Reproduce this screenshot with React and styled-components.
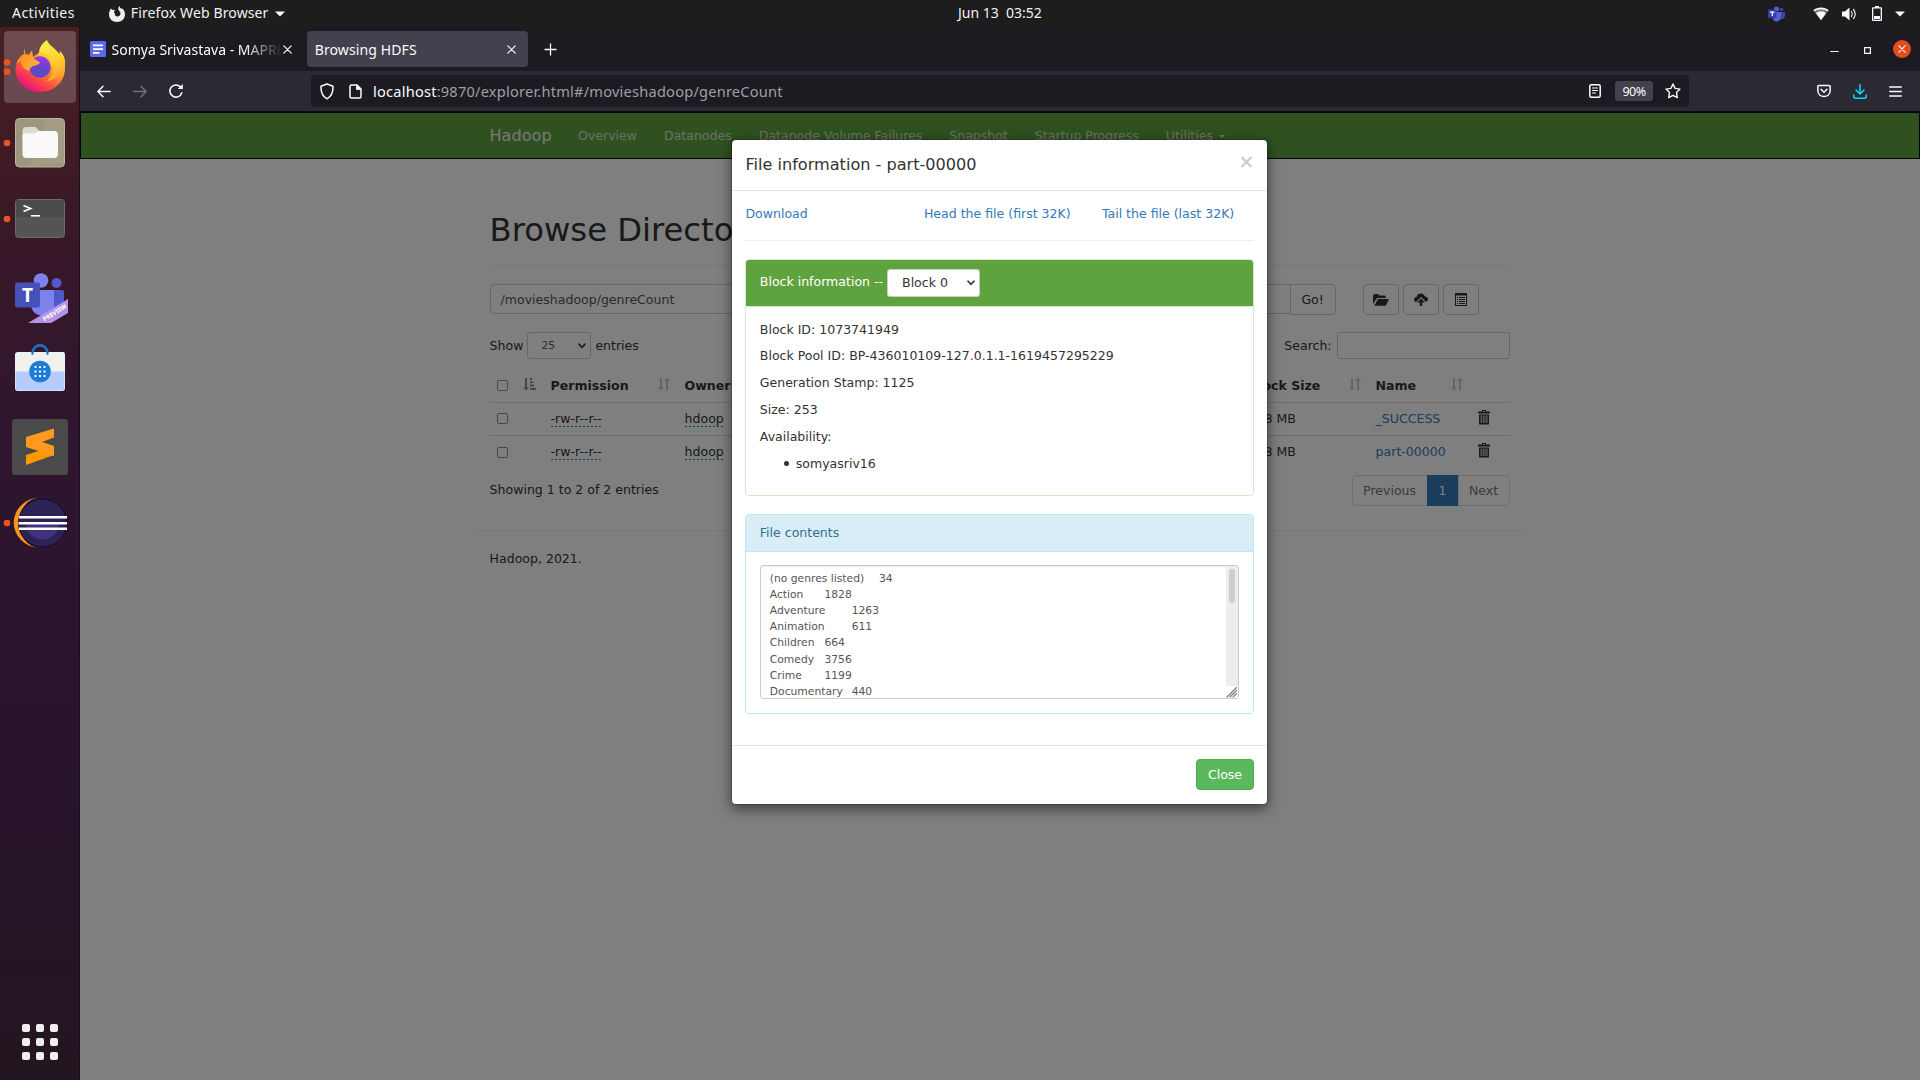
import React from "react";
import styled, { createGlobalStyle } from "styled-components";

const Global = createGlobalStyle`
  *, *::before, *::after { box-sizing: border-box; }
  body { margin: 0; background: #1d1d1d; overflow: hidden; }
`;

const ui = `"Noto Sans", "Open Sans", sans-serif`;
const web = `"DejaVu Sans", Verdana, sans-serif`;

const Desktop = styled.div`
  display: flex;
  flex-direction: column;
  width: 1920px;
  height: 1080px;
  font-family: ${ui};
  overflow: hidden;
`;

/* ---------- system bar ---------- */
const SystemBar = styled.header`
  display: flex;
  align-items: center;
  height: 27px;
  flex: none;
  background: #1d1d1d;
  color: #f2f2f2;
  font-size: 14px;
`;
const BarSide = styled.div`
  display: flex;
  align-items: center;
  ${(p) => (p.$end ? "flex: 1; justify-content: flex-end; padding-right: 15px;" : "width: 958px; padding-left: 12px;")}
`;
const Label = styled.span`
  white-space: pre;
  line-height: 24px;
  padding-bottom: ${(p) => (p.$lift ? 2 : 0)}px;
  letter-spacing: ${(p) => p.$track || 0}px;
  margin-left: ${(p) => p.$gap || 0}px;
`;
const Icon = styled.svg`
  display: block;
  flex: none;
  width: ${(p) => p.$w || 16}px;
  height: ${(p) => p.$h || p.$w || 16}px;
  margin-left: ${(p) => p.$gap || 0}px;
  margin-top: ${(p) => p.$drop || 0}px;
  fill: ${(p) => (p.$line ? "none" : p.$c || "#fbfbfe")};
  stroke: ${(p) => (p.$line ? p.$c || "#fbfbfe" : "none")};
  stroke-width: ${(p) => p.$line || 0};
  stroke-linecap: round;
  stroke-linejoin: round;
`;

/* ---------- dock ---------- */
const Main = styled.div`
  display: flex;
  flex: 1;
  min-height: 0;
`;
const Dock = styled.nav`
  display: flex;
  flex-direction: column;
  justify-content: space-between;
  width: 80px;
  flex: none;
  padding: 2px 0 16px;
  border-right: 1px solid #17101a;
  background: linear-gradient(180deg, #4a1f22 0, #431c24 80px, #391827 200px, #31162d 360px, #2d152f 520px, #27142a 800px, #23161f 1053px);
`;
const DockItems = styled.div`
  display: flex;
  flex-direction: column;
`;
const DockIcon = styled.svg`
  display: block;
  width: 79px;
  height: 76px;
`;
const AppGrid = styled.div`
  display: grid;
  grid-template-columns: repeat(3, 8px);
  grid-auto-rows: 8px;
  gap: 6px;
  padding: 4px 0 4px 22px;
`;
const AppDot = styled.i`
  background: #eeeeec;
  border-radius: 2px;
`;

/* ---------- browser chrome ---------- */
const Browser = styled.div`
  display: flex;
  flex-direction: column;
  flex: 1;
  min-width: 0;
`;
const TabStrip = styled.div`
  display: flex;
  align-items: center;
  height: 44px;
  flex: none;
  padding: 0 9px 0 4px;
  background: #1c1b22;
  color: #fbfbfe;
  font-size: 14px;
`;
const Tab = styled.div`
  display: flex;
  align-items: center;
  width: ${(p) => p.$w}px;
  height: 36px;
  padding-left: ${(p) => p.$pad}px;
  margin-right: ${(p) => p.$after || 0}px;
  border-radius: 4px;
  background: ${(p) => (p.$active ? "#42414d" : "transparent")};
`;
const TabTitle = styled.span`
  width: ${(p) => p.$w}px;
  padding-top: 2px;
  margin-left: ${(p) => p.$gap || 0}px;
  overflow: hidden;
  white-space: nowrap;
  line-height: 24px;
  letter-spacing: ${(p) => p.$track || 0}px;
  ${(p) => p.$fade && "mask-image: linear-gradient(90deg, #000 78%, transparent 100%);"}
`;
const Push = styled.span`
  flex: 1;
`;
const CloseWindow = styled.span`
  display: grid;
  place-items: center;
  width: 18px;
  height: 18px;
  margin-left: 20px;
  border-radius: 50%;
  background: #e24e1b;
`;
const Toolbar = styled.div`
  display: flex;
  align-items: center;
  height: 41px;
  flex: none;
  padding: 0 18px 0 17px;
  background: #2b2a33;
  border-bottom: 1px solid #0c0c0d;
`;
const UrlBar = styled.div`
  display: flex;
  align-items: center;
  width: 1378px;
  height: 32px;
  margin-left: 127px;
  padding: 0 8px 0 9px;
  border-radius: 4px;
  background: #1c1b22;
  color: #a09fa6;
  font-size: 14.6px;
`;
const Host = styled.b`
  font-weight: 400;
  color: #fbfbfe;
`;
const ZoomBadge = styled.span`
  width: 38px;
  height: 20px;
  margin-left: 14px;
  border-radius: 3px;
  background: #42414d;
  color: #fbfbfe;
  font-size: 12.5px;
  line-height: 21px;
  text-align: center;
  letter-spacing: -0.6px;
`;

/* ---------- web page ---------- */
const Viewport = styled.div`
  position: relative;
  flex: 1;
  overflow: hidden;
  background: #fff;
  font-family: ${web};
  font-size: 12.54px;
  line-height: 18px;
  color: #333;
`;
const Navbar = styled.div`
  display: flex;
  height: 47px;
  padding: 14px 0 0 408.5px;
  border: 1px solid #080808;
  background: #5fa33e;
`;
const Brand = styled.span`
  width: 88.5px;
  font-size: 16.12px;
  color: #f0f0f0;
`;
const NavLink = styled.span`
  display: flex;
  align-items: center;
  height: 18px;
  margin-right: 27px;
  color: #cfe2c7;
`;
const Caret = styled.i`
  margin-left: 5.5px;
  border: 3.5px solid transparent;
  border-top-color: #d2e5ca;
  border-bottom: 0;
`;
const Container = styled.main`
  width: 1020px;
  margin-left: 409.6px;
`;
const PageTitle = styled.h1`
  margin: 53px 0 18px;
  height: 54px;
  padding-top: 1px;
  border-bottom: 1px solid #eee;
  font-size: 32.24px;
  font-weight: 400;
  line-height: 35.5px;
`;
const Row = styled.div`
  display: flex;
  align-items: ${(p) => p.$align || "flex-start"};
  height: ${(p) => p.$h}px;
  margin-bottom: ${(p) => p.$after || 0}px;
`;
const PathInput = styled.div`
  width: 801px;
  height: 30px;
  padding: 6px 10px;
  border: 1px solid #ccc;
  border-radius: 4px 0 0 4px;
  color: #555;
`;
const Button = styled.span`
  display: flex;
  align-items: center;
  justify-content: center;
  width: ${(p) => p.$w}px;
  height: 31px;
  margin-left: ${(p) => p.$gap}px;
  border: 1px solid #ccc;
  border-radius: ${(p) => (p.$joined ? "0 4px 4px 0" : "4px")};
`;
const Select = styled.span`
  display: flex;
  align-items: center;
  justify-content: space-between;
  width: ${(p) => p.$w}px;
  height: ${(p) => p.$h}px;
  padding: 0 4px 0 ${(p) => p.$pad}px;
  margin: 0 4px;
  border: 1px solid #ccc;
  border-radius: 3px;
  background: #fff;
  color: ${(p) => p.$c || "#555"};
  font-size: ${(p) => p.$size}px;
`;
const SearchBox = styled.span`
  width: 173px;
  height: 27px;
  margin-left: 5px;
  border: 1px solid #ccc;
  border-radius: 3px;
`;
const TableRow = styled.div`
  display: grid;
  grid-template-columns: 54px 134px 564px 127px 102px 39px;
  padding: 7px 0;
  border-top: ${(p) => (p.$lined ? "1px solid #ddd" : 0)};
  border-bottom: ${(p) => (p.$head ? "1px solid #ddd" : 0)};
  font-weight: ${(p) => (p.$head ? 700 : 400)};
`;
const Cell = styled.div`
  display: flex;
  justify-content: space-between;
  height: 18px;
  padding: 0 8px 0 7px;
  color: ${(p) => (p.$link ? "#337ab7" : "inherit")};
`;
const Check = styled.i`
  width: 11px;
  height: 11px;
  margin-top: ${(p) => p.$top || 3}px;
  border: 1px solid #8f8f9d;
  border-radius: 2px;
`;
const Editable = styled.span`
  height: 17px;
  background: repeating-linear-gradient(90deg, #0088cc 0 2px, transparent 2px 4px) 0 100% / 100% 1px no-repeat;
`;
const Info = styled.span`
  height: 25px;
  flex: 1;
`;
const PageLink = styled.span`
  height: 31px;
  width: ${(p) => p.$w}px;
  margin-left: ${(p) => (p.$first ? 0 : -1)}px;
  line-height: 30px;
  text-align: center;
  border: 1px solid ${(p) => (p.$active ? "#337ab7" : "#ddd")};
  border-radius: ${(p) => p.$round || 0};
  background: ${(p) => (p.$active ? "#337ab7" : "#fff")};
  color: ${(p) => (p.$active ? "#fff" : "#777")};
`;
const Footer = styled.footer`
  margin: 24px -14px 0;
  padding: 19px 14px 0;
  border-top: 1px solid #eee;
`;

/* ---------- modal ---------- */
const Backdrop = styled.div`
  position: absolute;
  inset: 0;
  background: rgba(0, 0, 0, 0.5);
`;
const ModalLayer = styled.div`
  position: absolute;
  inset: 0;
  display: flex;
  align-items: flex-start;
  padding: 27px 0 0 651px;
`;
const Dialog = styled.section`
  width: 537px;
  height: 666px;
  border: 1px solid rgba(0, 0, 0, 0.2);
  border-radius: 5px;
  background: #fff;
  background-clip: padding-box;
  box-shadow: 0 4px 13px rgba(0, 0, 0, 0.5);
`;
const DialogHead = styled.div`
  display: flex;
  justify-content: space-between;
  height: 51px;
  padding: 14px 15.5px 0 13.4px;
  border-bottom: 1px solid #e5e5e5;
  font-size: 16.12px;
  line-height: 22px;
`;
const DialogBody = styled.div`
  padding: 14px 13px 0;
`;
const Links = styled.div`
  display: grid;
  grid-template-columns: 178.5px 178px 1fr;
  height: 36px;
  padding-left: 0.4px;
  color: #337ab7;
  border-bottom: 1px solid #eee;
  margin-bottom: 18px;
`;
const Panel = styled.div`
  height: ${(p) => p.$h}px;
  margin-bottom: 18px;
  border: 1px solid ${(p) => p.$line};
  border-radius: 4px;
`;
const PanelHead = styled.div`
  display: flex;
  align-items: ${(p) => (p.$tall ? "center" : "flex-start")};
  height: ${(p) => (p.$tall ? 47 : 37)}px;
  padding: ${(p) => (p.$tall ? "0 0 1px" : "9px 0 0")};
  padding-left: 13.8px;
  border-radius: 3px 3px 0 0;
  background: ${(p) => p.$bg};
  color: ${(p) => p.$fg};
  border-bottom: 1px solid ${(p) => p.$line};
`;
const PanelTitle = styled.span`
  padding-bottom: 2px;
`;
const BlockInfo = styled.div`
  display: flex;
  flex-direction: column;
  gap: 8.87px;
  padding: 13.55px 13.8px 0;
`;
const Replica = styled.div`
  display: flex;
  align-items: center;
  gap: 7px;
  padding-left: 24px;
  &::before {
    content: "";
    width: 5px;
    height: 5px;
    border-radius: 50%;
    background: #333;
  }
`;
const FileBox = styled.div`
  display: flex;
  height: 134px;
  margin: 13px 14px 0;
  padding: 1px 0 0 8.8px;
  border: 1px solid #ccc;
  border-radius: 3px;
  box-shadow: inset 0 1px 1px rgba(0, 0, 0, 0.075);
  overflow: hidden;
`;
const FileText = styled.pre`
  flex: 1;
  margin: 3.95px 0 0;
  font-family: ${web};
  font-size: 10.745px;
  line-height: 16.12px;
  tab-size: 8;
  color: #555;
`;
const ScrollColumn = styled.div`
  display: flex;
  flex-direction: column;
  width: 12px;
`;
const Track = styled.div`
  height: 119px;
  padding: 2px 3px;
  background: #eeedec;
`;
const Thumb = styled.div`
  width: 6px;
  height: 34px;
  border-radius: 3px;
  background: #cdcdcd;
`;
const DialogFoot = styled.div`
  display: flex;
  justify-content: flex-end;
  margin-top: 31px;
  padding: 13px 13px 0;
  border-top: 1px solid #e5e5e5;
`;
const CloseButton = styled.button`
  width: 58px;
  height: 31px;
  padding: 0;
  border: 1px solid #4cae4c;
  border-radius: 4px;
  background: #5cb85c;
  color: #fff;
  font: 12.54px/28px ${web};
`;

const Cross = ({ gap, s = 9 }) => (
  <Icon $w={s} $gap={gap} $line={1.2} viewBox="0 0 9 9"><path d="M.8.8l7.4 7.4M8.2.8L.8 8.2" /></Icon>
);
const Chevron = () => (
  <Icon $w={8} $h={6} $line={1.7} $c="#444" viewBox="0 0 8 6"><path d="M1 1.2l3 3.2 3-3.2" /></Icon>
);
const SortBoth = () => (
  <Icon $w={12} $h={14} $c="#ccc" viewBox="0 0 12 14">
    <path d="M2 1h2v9.5h2L3 13.6 0 10.5h2zM8 13.5V4H6l3-3.4L12 4h-2v9.5z" />
  </Icon>
);
const SortAsc = () => (
  <Icon $w={13} $h={14} $c="#8f8f8f" viewBox="0 0 13 14">
    <path d="M2 1h2v9.5h2L3 13.6 0 10.5h2zM7 1h2v2H7zM7 4.3h3v2H7zM7 7.6h4v2H7zM7 11h6v2H7z" />
  </Icon>
);
const Trash = () => (
  <Icon $w={12} $h={15} $c="#333" viewBox="0 0 12 15">
    <path fillRule="evenodd" d="M4 0h4v1.600h4v2H0v-2h4zM5 1v.8h2V1zM1 4.400h10V14.500H1zM2.700 5.500v7.500h.9V5.500zM4.800 5.500v7.500h.8V5.500zM6.600 5.500v7.500h.8V5.500zM8.500 5.500v7.500h.9V5.500z" />
  </Icon>
);

const Dot = ({ y }) => <circle cx="7" cy={y} r="3.3" fill="#e95420" />;

const FirefoxLogo = () => (
  <DockIcon viewBox="0 0 79 76">
    <defs>
      <linearGradient id="ffBody" x1=".85" y1=".15" x2=".25" y2=".95">
        <stop offset="0" stopColor="#ffd83a" /><stop offset=".35" stopColor="#ff9a2a" />
        <stop offset=".68" stopColor="#ff4a45" /><stop offset="1" stopColor="#e5127c" />
      </linearGradient>
      <linearGradient id="ffFlame" x1=".3" y1="0" x2=".6" y2="1">
        <stop offset="0" stopColor="#fff04a" /><stop offset=".6" stopColor="#ffcb2e" /><stop offset="1" stopColor="#ff9a30" />
      </linearGradient>
      <linearGradient id="ffGlobe" x1=".6" y1="0" x2=".4" y2="1">
        <stop offset="0" stopColor="#a436e6" /><stop offset=".5" stopColor="#6a43cc" /><stop offset="1" stopColor="#5350c4" />
      </linearGradient>
      <linearGradient id="ffFox" x1="0" y1="0" x2="1" y2=".8">
        <stop offset="0" stopColor="#ff8420" /><stop offset="1" stopColor="#ffb43a" />
      </linearGradient>
    </defs>
    <rect x="4" y="2" width="72" height="72" rx="4" fill="#fff" opacity=".2" />
    <Dot y={33.3} /><Dot y={42.8} />
    <path d="M25 19.500c-1 2-1.300 4.500-1 6.500-5 4-8.500 9-8.500 15C15.500 53 26 63 40 63s25-10 25-24c0-6-2-11-5-14l-13-7-14 10-1-6-3 4-4-1.500z" fill="url(#ffBody)" />
    <path d="M47 11c-6 4-8.500 9-8 15.500 9 .5 14.500 7 13.500 15.500-.6 4-3 7.500-6 10 10-.5 17-7.500 18.500-16 .8-5.500-1-10.500-5.500-14.500.5 2 .5 3 0 4-4-7-10.500-8.500-12.500-14.500z" fill="url(#ffFlame)" />
    <circle cx="40" cy="38" r="10.700" fill="url(#ffGlobe)" />
    <path d="M39 23.500c5 0 9 2 11.500 5.500l-2.500-.3c3 3 3.500 6 3 9-.5-5.500-4-10.700-12-11.200z" fill="#ffc631" />
    <path d="M25 19.500c-1 3-1 5-.8 7 1.500-.6 3-.5 4.500 0 .8-2 2-4 3.500-5-.3 2.500 0 5 .6 6.500 2 2.500 4.500 4 7 5-.3 3-4 3.200-7 4.200-2 .8-3.300 2-3.300 4.800-4.500-1-9-5-8.500-10l-4.500 3c.5-4 4-8 7.500-10z" fill="url(#ffFox)" />
  </DockIcon>
);
const FilesLogo = () => (
  <DockIcon viewBox="0 0 79 76">
    <Dot y={38} />
    <rect x="15.5" y="13.5" width="49" height="48.5" rx="4" fill="#9d967f" stroke="#b9b39f" />
    <path d="M46 14h15q3 0 3 3v41L30 61z" fill="#aaa38d" opacity=".5" />
    <path d="M22.500 34v-8q0-4 4-4h9l4 4h2v8z" fill="#dedad0" />
    <path d="M22.500 30q0-1.500 1.500-1.500h11l4-2.500h15q4 0 4 4v19q0 4-4 4H26.500q-4 0-4-4z" fill="#faf9f8" />
  </DockIcon>
);
const TermLogo = () => (
  <DockIcon viewBox="0 0 79 76">
    <Dot y={38} />
    <rect x="15.5" y="18.5" width="49" height="38" rx="3" fill="#545454" stroke="#6e6a6c" />
    <path d="M16 19h48v17H16z" fill="#4b4b4b" />
    <path d="M23.500 24.500l7 3-7 3" fill="none" stroke="#fff" strokeWidth="1.8" />
    <path d="M31 34h9v1.600h-9z" fill="#fff" />
  </DockIcon>
);
const TileText = styled.text`
  font: 700 ${(p) => p.$s}px "Noto Sans", sans-serif;
  fill: #fff;
`;
const TeamsLogo = () => (
  <DockIcon viewBox="0 0 79 76">
    <circle cx="41" cy="23.5" r="7.3" fill="#7b83eb" />
    <circle cx="56.5" cy="26" r="5" fill="#5059c9" />
    <path d="M50 33h12q2 0 2 2v12q-2 10-14 9z" fill="#5059c9" />
    <path d="M31 33h23v16c0 8-6 9.500-12 9.500S31 54 31 47z" fill="#7b83eb" />
    <rect x="15" y="25.5" width="25" height="25" rx="2" fill="#474fb8" />
    <TileText $s={19} x="22" y="44.600">T</TileText>
    <path d="M28 66L68 42v14L51 66z" fill="#b294e6" />
    <TileText $s={6} textLength="26.5" x="0" y="0" transform="translate(44.5 64.500) rotate(-32)">PREVIEW</TileText>
  </DockIcon>
);
const SoftwareLogo = () => (
  <DockIcon viewBox="0 0 79 76">
    <path d="M16 19h48q1 1 1 3v33q0 3-3 3H18q-3 0-3-3V22q0-3 3-3" fill="#f0f0ef" />
    <path d="M15.500 38.500h49V54q0 3.500-3.500 3.500H19q-3.500 0-3.500-3.500z" fill="#b5ccfa" />
    <path d="M32.500 20.500c0-11 15-11 15 0" fill="none" stroke="#1a78cf" strokeWidth="2.4" strokeLinecap="round" />
    <circle cx="40" cy="38.5" r="10.8" fill="#1b7dd4" />
    {[34.5, 39, 43.5].map((x) => [33, 37.5, 42].map((y) => <rect key={x + "-" + y} x={x} y={y} width="2" height="2" fill="#fff" />))}
  </DockIcon>
);
const SublimeLogo = () => (
  <DockIcon viewBox="0 0 79 76">
    <rect x="12" y="10" width="56" height="56" rx="3" fill="#4a4a4a" />
    <path d="M26 46l28-9v9l-28 10z" fill="#ff9800" />
    <path d="M26 36.500l28 9v-8l-14-5-14-4z" fill="#e88510" />
    <path d="M26 28l28-8.500v9L42 33l12 4v10l-28-9z" fill="#ff9a1f" />
  </DockIcon>
);
const EclipseLogo = () => (
  <DockIcon viewBox="0 0 79 76">
    <Dot y={38} />
    <path d="M39 12.500A27 25.300 0 0 0 39 63A21.500 25.300 0 0 1 39 12.500z" fill="#f7941e" />
    <circle cx="42.500" cy="38" r="24" fill="#2c2255" stroke="#14101f" />
    <path d="M26 38h33a16.500 16.500 0 0 1-33 0z" fill="#41307d" />
    <path d="M19 31h48v2.600H19zM18.500 37h48.500v2.400H18.500zM19 42.500h48v2.600H19z" fill="#fff" />
  </DockIcon>
);

const FILE = `(no genres listed)\t34
Action\t1828
Adventure\t1263
Animation\t611
Children\t664
Comedy\t3756
Crime\t1199
Documentary\t440`;

const blockLines = [
  "Block ID: 1073741949",
  "Block Pool ID: BP-436010109-127.0.1.1-1619457295229",
  "Generation Stamp: 1125",
  "Size: 253",
  "Availability:",
];

const files = ["_SUCCESS", "part-00000"];

export default function App() {
  return (
    <Desktop>
      <Global />
      <SystemBar>
        <BarSide>
          <Label $lift $track={0.45}>Activities</Label>
          <Icon $w={16} $gap={34} $c="#eee" viewBox="0 0 16 16">
            <path fillRule="evenodd" d="M2 2.500L3.500 4 6 3.800C4.500 6 5 7 6 7.500 5 11.500 11.500 11.500 11.500 7.500 11.500 5.500 10 5 9.500 4 9 2.500 9.500 1 10.500 0c.3 2 1.500 2 2.500 3l.5-.5C15 4 16 6 16 8.500 16 13 12.500 16 8 16S0 13 0 8.500C0 6 .8 4 2 2.500z" />
          </Icon>
          <Label $lift $gap={6} $track={0.12}>Firefox Web Browser</Label>
          <Icon $w={10} $h={6} $gap={6} viewBox="0 0 10 6"><path d="M0 .5h10L5 5.500z" /></Icon>
        </BarSide>
        <Label $lift>Jun 13  03:52</Label>
        <BarSide $end>
          <Icon $w={17} $h={16} viewBox="0 0 17 16">
            <circle cx="8.500" cy="3" r="2.500" fill="#5b5fd0" /><circle cx="13.500" cy="3.500" r="1.800" fill="#3d43a8" />
            <path d="M12 6h5v4q-1 4-5 3z" fill="#3d43a8" /><path d="M5 6h8v6q-2 4-5 3.500T5 12z" fill="#5b5fd0" />
            <path d="M0 3.500h8.500v8.500H0z" fill="#3a3fae" /><path d="M2 5.500h4.500v1.200H4.900V10H3.700V6.700H2z" fill="#fff" />
          </Icon>
          <Icon $w={16} $h={14} $gap={28} viewBox="0 0 16 14">
            <path d="M8 1c3 0 5.500 1 7.500 2.600L8 13.500.5 3.600C2.500 2 5 1 8 1z" opacity=".45" />
            <path d="M8 .5c3 0 5.500.8 7.700 2.700l-.8 1C11 1.500 5 1.500 1.100 4.200l-.8-1C2.500 1.300 5 .5 8 .5zM8 4.500c2 0 3.500.4 5 1.700l-5 6.900-5-6.900c1.500-1.300 3-1.700 5-1.700z" />
          </Icon>
          <Icon $w={16} $h={14} $gap={13} viewBox="0 0 16 14">
            <path d="M0 4.500h3L7.500.5v13L3 9.500H0z" />
            <path d="M9.500 4.500q1.500 2.500 0 5M11.500 2.500q3.500 4.500 0 9" fill="none" stroke="#ddd" strokeWidth="1.3" />
          </Icon>
          <Icon $w={10} $h={15} $gap={14} viewBox="0 0 10 15">
            <path fillRule="evenodd" d="M3 0h4v1.200h2q1 0 1 1V14q0 1-1 1H1q-1 0-1-1V2.200q0-1 1-1h2zM1.300 2.500v11.200h7.400V2.500zM2 10h6v3H2z" />
          </Icon>
          <Icon $w={10} $h={6} $gap={13} viewBox="0 0 10 6"><path d="M0 .5h10L5 5.500z" /></Icon>
        </BarSide>
      </SystemBar>

      <Main>
        <Dock>
          <DockItems>
            <FirefoxLogo />
            <FilesLogo />
            <TermLogo />
            <TeamsLogo />
            <SoftwareLogo />
            <SublimeLogo />
            <EclipseLogo />
          </DockItems>
          <AppGrid>
            {Array.from({ length: 9 }, (_, i) => <AppDot key={i} />)}
          </AppGrid>
        </Dock>

        <Browser>
          <TabStrip>
            <Tab $w={216} $pad={6} $after={7}>
              <Icon $w={16} viewBox="0 0 16 16">
                <rect width="16" height="16" rx="1.500" fill="#5a68f2" />
                <path d="M3 3.500h10v1.800H3zM3 7.200h10V9H3zM3 11h6.500v1.800H3z" fill="#fff" />
              </Icon>
              <TabTitle $w={170} $gap={5.5} $fade>Somya Srivastava - MAPREDUCE</TabTitle>
              <Cross gap={1} />
            </Tab>
            <Tab $active $w={221} $pad={7.7}>
              <TabTitle $w={192.3} $track={0.12}>Browsing HDFS</TabTitle>
              <Cross gap={0} />
            </Tab>
            <Icon $w={13} $gap={16} $line={1.3} viewBox="0 0 13 13"><path d="M6.500 1v11M1 6.500h11" /></Icon>
            <Push />
            <Icon $w={9} $h={9} $line={1.2} viewBox="0 0 9 9"><path d="M.8 6.500h7.400" /></Icon>
            <Icon $w={9} $h={9} $gap={25} viewBox="0 0 9 9">
              <path fillRule="evenodd" d="M0 2h7v7H0zM1.200 3.200v4.600h4.600V3.200z" /><path d="M2 .5h6.500V7" fill="none" stroke="#88878d" />
            </Icon>
            <CloseWindow><Cross s={8} /></CloseWindow>
          </TabStrip>

          <Toolbar>
            <Icon $w={14} $h={13} $line={1.4} viewBox="0 0 14 13"><path d="M13.200 6.500H.9M6 1.200L.9 6.500 6 11.800" /></Icon>
            <Icon $w={14} $h={13} $gap={22} $line={1.4} $c="#75747b" viewBox="0 0 14 13"><path d="M.8 6.500h12.300M8 1.200l5.100 5.300L8 11.800" /></Icon>
            <Icon $w={16} $gap={21} $line={1.5} viewBox="0 0 16 16">
              <path d="M13.800 9.800A6.100 6.100 0 1 1 12.200 3.600L13.500 5" /><path d="M14.800 1v5h-5z" fill="#fbfbfe" stroke="none" />
            </Icon>
            <UrlBar>
              <Icon $w={14} $h={17} $line={1.5} viewBox="0 0 14 17"><path d="M7 1l6 2.200c.3 5.500-1 9.800-6 12.600C2 13 .7 8.700 1 3.200z" /></Icon>
              <Icon $w={13} $h={15} $gap={15} $line={1.5} viewBox="0 0 13 15"><path d="M2.500 1h5.500l4 4v7.500q0 1.500-1.500 1.500h-8Q1 14 1 12.500v-10Q1 1 2.500 1z" /><path d="M7.500 1v4.500H12z" fill="#fbfbfe" strokeWidth=".8" /></Icon>
              <Label $gap={11} $track={0.22}><Host>localhost</Host>:9870/explorer.html#/movieshadoop/genreCount</Label>
              <Push />
              <Icon $w={12} $h={14} $line={1.5} viewBox="0 0 12 14"><rect x=".8" y=".8" width="10.400" height="12.400" rx="1.500" /><path d="M3.500 4h5M3.500 6.500h5M3.500 9h3" strokeWidth="1.1" /></Icon>
              <ZoomBadge>90%</ZoomBadge>
              <Icon $w={16} $gap={12} $line={1.4} viewBox="0 0 16 16"><path d="M8 1l2.100 4.400 4.900.7-3.500 3.500.8 5L8 12.300l-4.300 2.300.8-5L1 6.100l4.900-.7z" /></Icon>
            </UrlBar>
            <Push />
            <Icon $w={14} $h={14} $line={1.5} viewBox="0 0 14 14"><path d="M2 1.500h10q1.200 0 1.200 1.200V6c0 8.700-12.400 8.700-12.400 0V2.700Q.8 1.500 2 1.500zM4 5.300l3 2.900 3-2.900" /></Icon>
            <Icon $w={14} $h={15} $gap={22} $line={1.5} $c="#00ddff" viewBox="0 0 14 15"><path d="M7 .8v9M3 6l4 4 4-4M.8 11v1.200q0 2 2 2h8.400q2 0 2-2V11" /></Icon>
            <Icon $w={13} $h={11} $gap={22} $line={1.3} viewBox="0 0 13 11"><path d="M.7 1h11.600M.7 5.500h11.600M.7 10h11.600" /></Icon>
          </Toolbar>

          <Viewport>
            <Navbar>
              <Brand>Hadoop</Brand>
              <NavLink>Overview</NavLink>
              <NavLink>Datanodes</NavLink>
              <NavLink>Datanode Volume Failures</NavLink>
              <NavLink>Snapshot</NavLink>
              <NavLink>Startup Progress</NavLink>
              <NavLink>Utilities <Caret /></NavLink>
            </Navbar>
            <Container>
              <PageTitle>Browse Directory</PageTitle>
              <Row $h={31} $after={17}>
                <PathInput>/movieshadoop/genreCount</PathInput>
                <Button $w={46} $gap={-1} $joined>Go!</Button>
                <Button $w={36} $gap={27}>
                  <Icon $w={16} $h={12} $gap={1} $c="#333" viewBox="0 0 16 12"><path d="M0 10V1.500L1.500 0H5l1.500 1.500H12L13 3v1H4zM5 5h11l-3.200 6.800H1.200z" /></Icon>
                </Button>
                <Button $w={36} $gap={4}>
                  <Icon $w={14} $h={13} $c="#333" viewBox="0 0 14 13"><path d="M2.600 9C.5 9 0 7.500 0 6.500 0 5 1.200 4 2.500 4 3 1.500 4.800.5 6.800.5 9 .5 10.500 2 11 3.500c2 0 3 1.300 3 2.800S13 8.800 11.800 8.800L7 4 2.200 9z" /><path d="M7 5.500l4 4H8.200V13H5.800V9.500H3z" /></Icon>
                </Button>
                <Button $w={36} $gap={4}>
                  <Icon $w={12} $h={13} $c="#333" viewBox="0 0 12 13"><path fillRule="evenodd" d="M0 0h12v13H0zM1 2.500V12h10V2.500z" /><path d="M2 4h1.200v1H2zM4 4h6v1H4zM2 6h1.200v1H2zM4 6h6v1H4zM2 8h1.200v1H2zM4 8h6v1H4zM2 10h1.200v1H2zM4 10h6v1H4z" /></Icon>
                </Button>
              </Row>
              <Row $h={27} $after={11} $align="center">
                <span>Show</span>
                <Select $w={64} $h={27} $pad={13} $size={10.745}>25<Chevron /></Select>
                <span>entries</span>
                <Push />
                <span>Search:</span>
                <SearchBox />
              </Row>
              <TableRow $head>
                <Cell><Check /><SortAsc /></Cell>
                <Cell>Permission<SortBoth /></Cell>
                <Cell>Owner</Cell>
                <Cell>Block Size<SortBoth /></Cell>
                <Cell>Name<SortBoth /></Cell>
                <Cell />
              </TableRow>
              {files.map((name, i) => (
                <TableRow key={name} $lined={i > 0}>
                  <Cell><Check $top={3 + i} /></Cell>
                  <Cell><Editable>-rw-r--r--</Editable></Cell>
                  <Cell><Editable>hdoop</Editable></Cell>
                  <Cell>128 MB</Cell>
                  <Cell $link>{name}</Cell>
                  <Cell><Trash /></Cell>
                </TableRow>
              ))}
              <Row $h={38} $align="flex-end">
                <Info>Showing 1 to 2 of 2 entries</Info>
                <PageLink $w={76} $first $round="4px 0 0 4px">Previous</PageLink>
                <PageLink $w={32} $active>1</PageLink>
                <PageLink $w={52} $round="0 4px 4px 0">Next</PageLink>
              </Row>
              <Footer>Hadoop, 2021.</Footer>
            </Container>

            <Backdrop />
            <ModalLayer>
              <Dialog>
                <DialogHead>
                  <span>File information - part-00000</span>
                  <Icon $w={11} $h={12} $line={2.3} $c="#ccc" $drop={2} viewBox="0 0 11 12"><path d="M1.200 1.700l8.600 8.600M9.800 1.700l-8.600 8.600" /></Icon>
                </DialogHead>
                <DialogBody>
                  <Links>
                    <span>Download</span>
                    <span>Head the file (first 32K)</span>
                    <span>Tail the file (last 32K)</span>
                  </Links>
                  <Panel $h={237} $line="#d6e9c6">
                    <PanelHead $tall $bg="#5fa33e" $fg="#fff" $line="#d6e9c6">
                      <PanelTitle>Block information --</PanelTitle>
                      <Select $w={93} $h={28} $pad={14} $size={12.54} $c="#333">Block 0<Chevron /></Select>
                    </PanelHead>
                    <BlockInfo>
                      {blockLines.map((t) => <span key={t}>{t}</span>)}
                      <Replica>somyasriv16</Replica>
                    </BlockInfo>
                  </Panel>
                  <Panel $h={200} $line="#bce8f1">
                    <PanelHead $bg="#d9edf7" $fg="#31708f" $line="#bce8f1">File contents</PanelHead>
                    <FileBox>
                      <FileText>{FILE}</FileText>
                      <ScrollColumn>
                        <Track><Thumb /></Track>
                        <Icon $w={12} $h={12} $line={1.1} $c="#777" viewBox="0 0 12 12"><path d="M1 11L10.500 1.500M4 11l6.500-6.500M7 11l3.500-3.500" /></Icon>
                      </ScrollColumn>
                    </FileBox>
                  </Panel>
                </DialogBody>
                <DialogFoot>
                  <CloseButton>Close</CloseButton>
                </DialogFoot>
              </Dialog>
            </ModalLayer>
          </Viewport>
        </Browser>
      </Main>
    </Desktop>
  );
}
